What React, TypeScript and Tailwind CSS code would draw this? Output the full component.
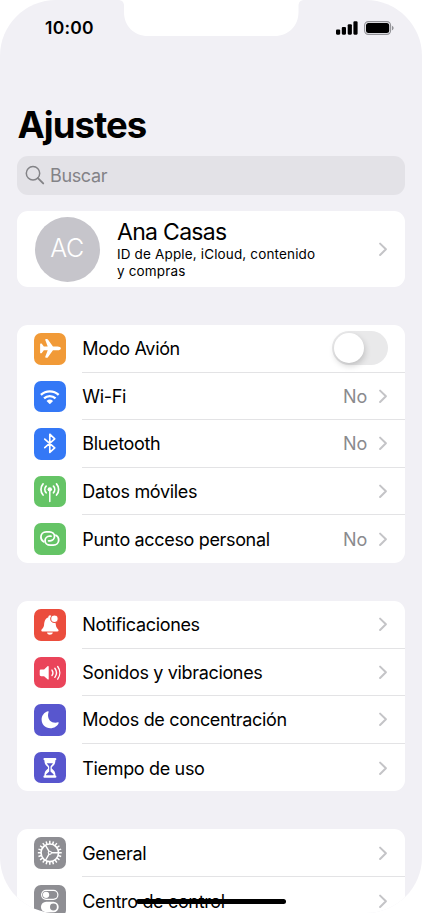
import type { ReactNode } from "react"

interface Item {
  label: string
  color: string
  icon: ReactNode
  value?: string
  toggle?: boolean
}

const stroke = {
  fill: "none",
  stroke: "#fff",
  strokeLinecap: "round" as const,
  strokeLinejoin: "round" as const,
}

const gearTeeth = Array.from({ length: 20 }, (_, i) => i * 18)

const connectivity: Item[] = [
  {
    label: "Modo Avión",
    color: "bg-[#f19a37]",
    toggle: true,
    icon: (
      <path
        fill="#fff"
        d="M11.3 6.9c0-.5.4-.8.9-.8h.8c.5 0 .8.2 1.1.6l5.1 7h4.6c1.9 0 3.4.8 3.4 1.9s-1.5 1.9-3.4 1.9h-4.6l-5.1 7c-.3.4-.6.6-1.1.6h-.8c-.5 0-.9-.3-.9-.8l2.6-6.8H10l-2.1 2.7c-.2.2-.4.3-.7.3h-.4c-.4 0-.6-.2-.6-.6v-8.600c0-.4.2-.6.6-.6h.4c.3 0 .5.1.7.3l2.1 2.7h3.9z"
      />
    ),
  },
  {
    label: "Wi-Fi",
    color: "bg-[#3478f6]",
    value: "No",
    icon: (
      <>
        <path {...stroke} strokeWidth="2.300" strokeLinecap="butt" d="M7 14.100a12.800 12.800 0 0 1 18 0M10.200 17.600a8.300 8.300 0 0 1 11.600 0" />
        <path fill="#fff" d="M12.700 20.200a5 5 0 0 1 6.600 0l-2.800 2.900a.7.7 0 0 1-1 0z" />
      </>
    ),
  },
  {
    label: "Bluetooth",
    color: "bg-[#3478f6]",
    value: "No",
    icon: <path {...stroke} strokeWidth="1.700" d="M10.900 11.200 21 20.100l-5 4.600V6.300l5 4.600-10.100 9" />,
  },
  {
    label: "Datos móviles",
    color: "bg-[#65c466]",
    icon: (
      <>
        <circle cx="16" cy="13.500" r="2.200" fill="#fff" />
        <path {...stroke} strokeWidth="1.500" d="M16 14v11.800" />
        <path {...stroke} strokeWidth="1.700" d="M12.300 10.300a5 5 0 0 0 0 6.700M19.700 10.300a5 5 0 0 1 0 6.700M9.200 8a8.500 8.500 0 0 0 0 11.300M22.800 8a8.500 8.500 0 0 1 0 11.300" />
      </>
    ),
  },
  {
    label: "Punto acceso personal",
    color: "bg-[#65c466]",
    value: "No",
    icon: (
      <>
        <path {...stroke} strokeWidth="1.800" d="M9.800 19C8.100 18.200 7 16.400 7 14.300 7 11.200 9.300 9 12.400 9h3.200c3 0 5.200 2 5.200 4.500s-2 4.500-4.500 4.500h-1.500" />
        <path {...stroke} strokeWidth="1.800" d="M22.200 12.400c1.700.8 2.800 2.600 2.800 4.700 0 3.100-2.300 5.300-5.400 5.300h-3.200c-3 0-5.200-2-5.200-4.500s2-4.500 4.500-4.500h1.500" />
      </>
    ),
  },
]

const alerts: Item[] = [
  {
    label: "Notificaciones",
    color: "bg-[#eb4d3d]",
    icon: (
      <>
        <path fill="#fff" d="M8.500 22.700c-.7 0-1.100-.4-1.100-.9 0-1.300 2.500-2.300 2.800-5.800.3-4.600 1.700-6.700 4.200-7.500.2-1.400.9-2.100 1.800-2.100 1 0 1.700.7 1.900 2.100 2.400.8 3.700 3 4 7.500.3 3.500 2.800 4.500 2.800 5.800 0 .5-.4.9-1.100.9z" />
        <path fill="#fff" d="M13.200 23.700h5.900c-.3 1.400-1.500 2.300-3 2.300s-2.700-.9-2.900-2.300z" />
        <circle cx="20.700" cy="9.900" r="3.800" fill="#fff" stroke="#eb4d3d" strokeWidth="1.100" />
      </>
    ),
  },
  {
    label: "Sonidos y vibraciones",
    color: "bg-[#ea445a]",
    icon: (
      <>
        <path fill="#fff" d="M7.300 12.600h2.900l3.500-3.200c.6-.5 1.200-.3 1.200.4v12.400c0 .7-.6.9-1.200.4l-3.500-3.200H7.300c-1 0-1.500-.5-1.500-1.400v-4c0-.9.500-1.400 1.500-1.400z" />
        <path {...stroke} strokeWidth="1.400" d="M18.200 13.200a4.800 4.800 0 0 1 0 5.600M21.100 11.400a7.800 7.800 0 0 1 0 9.200M24 9.600a10.800 10.800 0 0 1 0 12.800" />
      </>
    ),
  },
  {
    label: "Modos de concentración",
    color: "bg-[#5856ce]",
    icon: (
      <path fill="#fff" d="M14 7.300c.5-.2 1 .2.8.8a9.600 9.600 0 0 0-.6 3.400c0 4.600 2.900 7.500 7.500 7.500 1 0 2-.2 2.500-.4.600-.2 1 .2.800.7-1.300 3.200-4.600 5.300-8.400 5.300-5.100 0-8.900-3.700-8.900-8.800 0-3.900 2.500-7.400 6.300-8.500z" />
    ),
  },
  {
    label: "Tiempo de uso",
    color: "bg-[#5856ce]",
    icon: (
      <>
        <path
          fill="#fff"
          d="M11 6h10.200c.9 0 1.500.5 1.500 1.200s-.4 1.100-1 1.200c0 3.100-1.200 5-3.200 6.500-.7.500-.7 1.900 0 2.400 2 1.500 3.200 3.400 3.200 6.500.6.100 1 .5 1 1.200S22.100 26.200 21.200 26.200H11c-.9 0-1.500-.5-1.500-1.200s.4-1.100 1-1.200c0-3.100 1.200-5 3.200-6.500.7-.5.7-1.900 0-2.400-2-1.500-3.200-3.400-3.200-6.500-.6-.1-1-.5-1-1.200S10.100 6 11 6z"
        />
        <path fill="#5856ce" d="M13 11.500h6.200c-.5 1-1.200 1.700-2 2.400-.4.400-.5.900-.5 1.700v4.200l3 2.700c.4.400.2 1-.4 1h-6.500c-.6 0-.8-.6-.4-1l3-2.700v-4.200c0-.8-.1-1.300-.5-1.700-.8-.7-1.500-1.400-1.900-2.400z" />
      </>
    ),
  },
]

const system: Item[] = [
  {
    label: "General",
    color: "bg-[#8e8e93]",
    icon: (
      <>
        {gearTeeth.map((angle) => (
          <path key={angle} stroke="#fff" strokeWidth="1.500" d="M16 3.900v3.200" transform={`rotate(${angle} 16 16)`} />
        ))}
        <circle cx="16" cy="16" r="8.900" {...stroke} strokeWidth="1.700" />
        <path {...stroke} strokeWidth="1.400" d="M17.800 16h6.500M15.100 14.400l-3.300-5.700M15.100 17.600l-3.300 5.700" />
        <circle cx="16" cy="16" r="1.600" {...stroke} strokeWidth="1.100" />
      </>
    ),
  },
  {
    label: "Centro de control",
    color: "bg-[#8e8e93]",
    icon: (
      <>
        <rect x="7.700" y="5.500" width="16.500" height="9" rx="4.500" {...stroke} strokeWidth="1.200" />
        <circle cx="12.200" cy="10" r="3.200" fill="#fff" />
        <rect x="7" y="17" width="18" height="10.600" rx="5.300" fill="#fff" />
        <circle cx="19.700" cy="22.300" r="3.500" fill="#8e8e93" />
      </>
    ),
  },
]

function Chevron() {
  return (
    <svg className="h-4 w-[9px] shrink-0" viewBox="0 0 9 16" fill="none">
      <path d="M1.100 2.600 6.900 8.300l-5.800 5.700" stroke="#c4c4c7" strokeWidth="2" strokeLinecap="round" strokeLinejoin="round" />
    </svg>
  )
}

function Toggle() {
  return (
    <div className="flex h-[34px] w-[56px] items-center rounded-full bg-[#e9e9ea] pl-[2px]">
      <div className="size-[30px] rounded-full bg-white shadow-[1px_3px_6px_rgba(0,0,0,0.18)]" />
    </div>
  )
}

function Group({ items }: { items: Item[] }) {
  return (
    <section className="shrink-0 overflow-hidden rounded-[11px] bg-white pl-[17.400px]">
      {items.map((item, i) => (
        <div key={item.label} className="flex h-[47.600px] items-center gap-4">
          <div className={`size-[31.600px] shrink-0 rounded-[7px] ${item.color}`}>
            <svg viewBox="0 0 32 32" className="size-full">
              {item.icon}
            </svg>
          </div>
          <div className={`flex h-full grow items-center pr-[17.500px] ${i < items.length - 1 ? "border-b border-[#e3e3e5]" : ""}`}>
            <span className="grow whitespace-nowrap pl-[0.300px] pt-px text-[18px] tracking-[-0.340px] text-black">{item.label}</span>
            {item.value && <span className="mr-[11.500px] pt-px text-[18px] tracking-[-0.200px] text-[#8a8a8e]">{item.value}</span>}
            {item.toggle ? <Toggle /> : <Chevron />}
          </div>
        </div>
      ))}
    </section>
  )
}

export default function App() {
  return (
    <div className="h-[913px] w-[422px] overflow-hidden bg-white font-['Inter',sans-serif]">
      <main className="relative flex h-full flex-col overflow-hidden rounded-[56px] bg-[#f1f0f5] px-[17px]">
        <svg className="absolute left-[116px] top-0 h-9 w-[190px]" viewBox="0 0 190 36">
          <path fill="#fff" d="M2 0c4 0 6 2 6 6v6c0 14 10 24 24 24h126.500c14 0 24-10 24-24V6c0-4 2-6 6-6z" />
        </svg>

        <header className="flex h-14 shrink-0 items-center justify-between pl-7 pr-[11px]">
          <span className="pt-px text-[17.500px] font-semibold tracking-[0.250px]">10:00</span>
          <div className="flex items-center gap-[6px]">
            <svg className="h-[14px] w-[22px]" viewBox="0 0 22 14">
              <rect x="0" y="8.500" width="4.200" height="5.200" rx="1.100" />
              <rect x="5.800" y="6" width="4.200" height="7.700" rx="1.100" />
              <rect x="11.700" y="3.200" width="4.200" height="10.500" rx="1.100" />
              <rect x="17.400" y="0.300" width="4.200" height="13.400" rx="1.100" />
            </svg>
            <svg className="h-[14px] w-[30px]" viewBox="0 0 30 14">
              <rect x="0.600" y="0.600" width="26" height="12.800" rx="3.800" fill="none" stroke="#929297" strokeWidth="1.100" />
              <rect x="2" y="2" width="23.200" height="10" rx="2.500" />
              <path fill="#929297" d="M28 4.700c1 .4 1.600 1.300 1.600 2.300S29 8.900 28 9.300z" />
            </svg>
          </div>
        </header>

        <h1 className="mt-[46px] h-[46px] shrink-0 pl-[0.500px] text-[36.500px] font-bold leading-[46px] tracking-[-0.950px] text-black">Ajustes</h1>

        <div className="mt-2 flex h-[38.500px] shrink-0 items-center gap-[5px] rounded-[11px] bg-[#e3e2e7] pl-2">
          <svg className="size-5" viewBox="0 0 20 20" fill="none" stroke="#838387" strokeWidth="1.500" strokeLinecap="round">
            <circle cx="8" cy="8.200" r="6.700" />
            <path d="m12.900 13.100 5.300 5.300" strokeWidth="1.900" />
          </svg>
          <span className="text-[18px] tracking-[-0.350px] text-[#838387]">Buscar</span>
        </div>

        <section className="mt-[16.500px] flex h-[76px] shrink-0 items-center rounded-[11px] bg-white pl-[17.500px] pr-[17.500px]">
          <div className="flex size-[65px] shrink-0 items-center justify-center rounded-full bg-[#c6c5cb] text-[25px] font-light tracking-[-0.300px] text-white">
            AC
          </div>
          <div className="ml-[17.500px] grow pt-[2px] text-black">
            <p className="mt-[-2px] text-[23px] leading-[26px] tracking-[-0.700px]">Ana Casas</p>
            <p className="mt-px text-[13.500px] leading-[16.500px] tracking-[0.150px]">
              ID de Apple, iCloud, contenido
              <br />y compras
            </p>
          </div>
          <Chevron />
        </section>

        <div className="mt-[38px] flex flex-col gap-[38px]">
          <Group items={connectivity} />
          <Group items={alerts} />
          <Group items={system} />
        </div>

        <div className="absolute bottom-[9px] left-[136px] h-[5px] w-[150px] rounded-full bg-black" />
      </main>
    </div>
  )
}
